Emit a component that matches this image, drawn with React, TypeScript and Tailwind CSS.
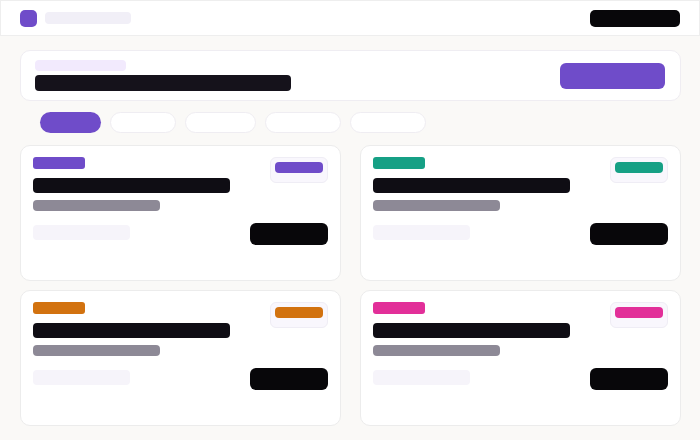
import React from 'react';

type CardProps = {
  accent: string;
};

const Card: React.FC<CardProps> = ({ accent }) => {
  return (
    <div className="h-[136px] rounded-[10px] border border-[#ececec] bg-white px-3 pt-[11px] flex justify-between">
      <div className="flex flex-col">
        <div className={`h-3 w-[52px] rounded-[3px] ${accent}`} />
        <div className="mt-[9px] h-[15px] w-[197px] rounded-[4px] bg-[#0f0d14]" />
        <div className="mt-[7px] h-[11px] w-[127px] rounded-[4px] bg-[#8d8996]" />
        <div className="mt-[14px] h-[15px] w-[97px] rounded-[4px] bg-[#f6f4fa]" />
      </div>
      <div className="flex flex-col items-end">
        <div className="h-[26px] w-[58px] rounded-[6px] border border-[#efedf5] bg-[#f9f7fd] px-1 pt-[4px]">
          <div className={`h-[11px] w-[48px] rounded-[4px] ${accent}`} />
        </div>
        <div className="mt-[40px] h-[22px] w-[78px] rounded-[6px] bg-[#08070a]" />
      </div>
    </div>
  );
};

export default function App() {
  return (
    <div className="w-[700px] h-[440px] overflow-hidden bg-[#faf9f7] flex flex-col">
      <div className="h-9 shrink-0 bg-white border border-[#eeeeee] px-[19px] flex items-center justify-between">
        <div className="flex items-center gap-2">
          <div className="h-[17px] w-[17px] rounded-[5px] bg-[#6f4cc9]" />
          <div className="h-3 w-[86px] rounded-[4px] bg-[#f1eff7]" />
        </div>
        <div className="h-[17px] w-[90px] rounded-[5px] bg-[#08070a]" />
      </div>

      <div className="pl-5 pt-[14px] w-[681px]">
        <div className="h-[51px] rounded-[10px] border border-[#efedf2] bg-white pl-[14px] pr-[15px] flex items-center justify-between">
          <div className="flex flex-col gap-1">
            <div className="h-[11px] w-[91px] rounded-[4px] bg-[#f2eafd]" />
            <div className="h-4 w-[256px] rounded-[4px] bg-[#15121b]" />
          </div>
          <div className="h-[26px] w-[105px] rounded-[6px] bg-[#6f4cc9]" />
        </div>

        <div className="mt-[11px] pl-5 flex gap-[9px]">
          <div className="h-[21px] w-[61px] rounded-full bg-[#6f4cc9]" />
          <div className="h-[21px] w-[66px] rounded-full border border-[#efedf2] bg-white" />
          <div className="h-[21px] w-[71px] rounded-full border border-[#efedf2] bg-white" />
          <div className="h-[21px] w-[76px] rounded-full border border-[#efedf2] bg-white" />
          <div className="h-[21px] w-[76px] rounded-full border border-[#efedf2] bg-white" />
        </div>

        <div className="mt-3 grid grid-cols-[321px_321px] gap-x-[19px] gap-y-[9px]">
          <Card accent="bg-[#6f4cc9]" />
          <Card accent="bg-[#16a085]" />
          <Card accent="bg-[#d2720f]" />
          <Card accent="bg-[#e22f99]" />
        </div>
      </div>
    </div>
  );
}
